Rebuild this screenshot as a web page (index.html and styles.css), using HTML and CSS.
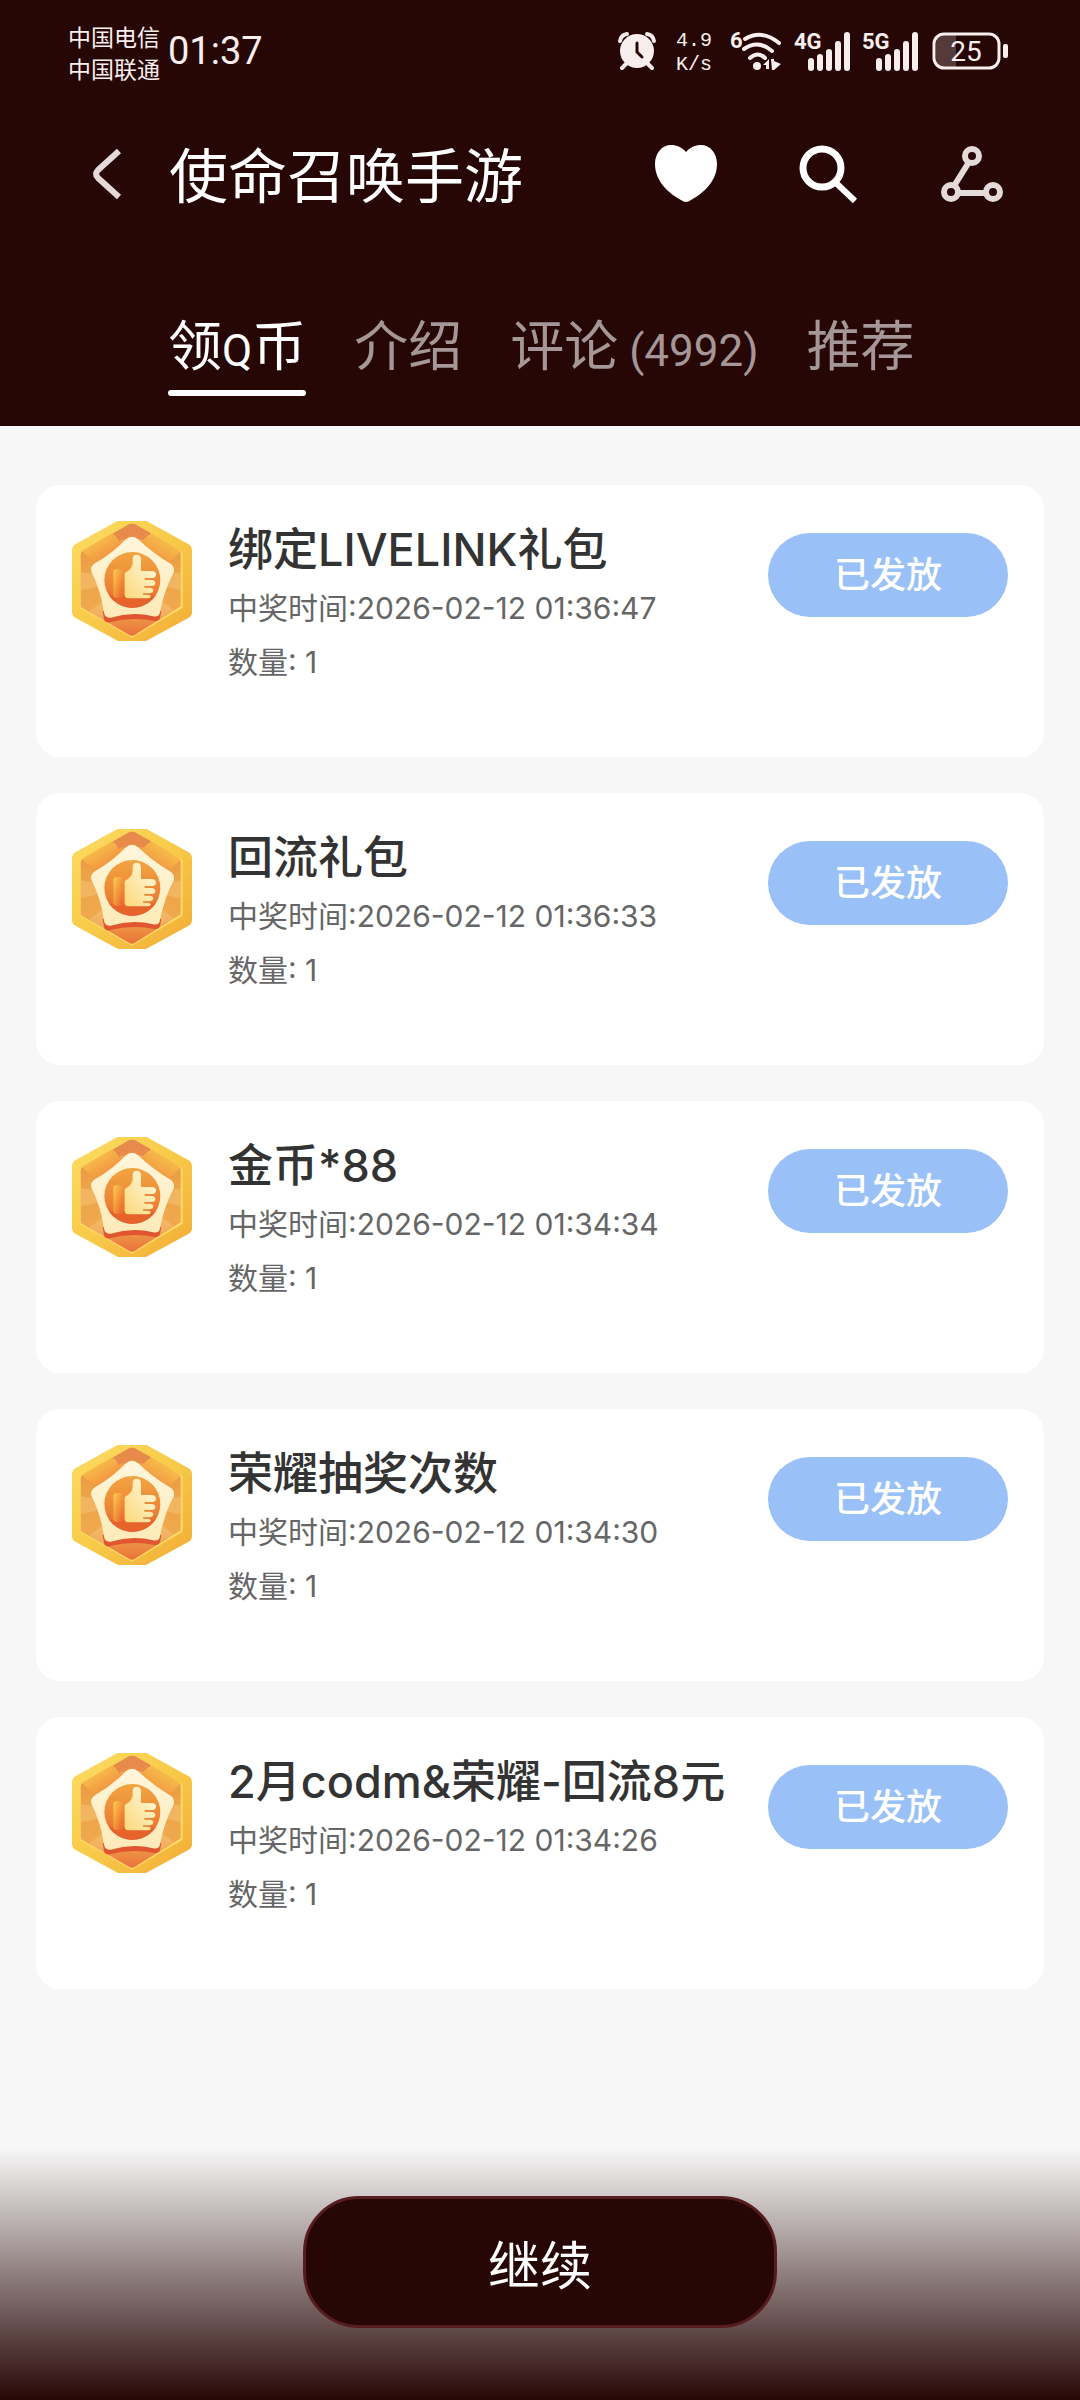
FILE: index.html
```html
<!DOCTYPE html>
<html lang="zh-CN">
<head>
<meta charset="utf-8">
<meta name="viewport" content="width=device-width, initial-scale=1">
<title>使命召唤手游</title>
<link rel="stylesheet" href="styles.css">
</head>
<body>
<svg class="sprite" width="0" height="0" aria-hidden="true">
  <defs>
    <linearGradient id="rim" x1="0" y1="0" x2="1" y2="1">
      <stop offset="0" stop-color="#fbdc62"/><stop offset=".5" stop-color="#f8ca48"/><stop offset="1" stop-color="#f2ab35"/>
    </linearGradient>
    <linearGradient id="inner" x1="0" y1="0" x2="0" y2="1">
      <stop offset="0" stop-color="#ec8748"/><stop offset=".4" stop-color="#eda446"/><stop offset=".75" stop-color="#f0a84e"/><stop offset="1" stop-color="#ea7338"/>
    </linearGradient>
    <linearGradient id="band" x1="0" y1="0" x2="1" y2="1">
      <stop offset="0" stop-color="#fbd552"/><stop offset="1" stop-color="#ec7038"/>
    </linearGradient>
    <linearGradient id="bandRight" x1="1" y1="0" x2="0" y2="1">
      <stop offset="0" stop-color="#fbd552"/><stop offset="1" stop-color="#ec7a38"/>
    </linearGradient>
    <linearGradient id="star" x1="0" y1="0" x2="0" y2="1">
      <stop offset="0" stop-color="#fff6dc"/><stop offset="1" stop-color="#fdeab8"/>
    </linearGradient>
    <linearGradient id="disc" x1="0" y1="0" x2="0" y2="1">
      <stop offset="0" stop-color="#f2a541"/><stop offset=".6" stop-color="#ec8535"/><stop offset="1" stop-color="#e4602b"/>
    </linearGradient>
    <linearGradient id="hand" x1="1" y1="0" x2="0" y2="1">
      <stop offset="0" stop-color="#fffbe6"/><stop offset="1" stop-color="#fbd878"/>
    </linearGradient>
    <linearGradient id="cuff" x1="0" y1="0" x2="1" y2="1">
      <stop offset="0" stop-color="#fbcf4c"/><stop offset="1" stop-color="#e95f2c"/>
    </linearGradient>
    <symbol id="badge" viewBox="0 0 360 360">
      <path fill="url(#rim)" d="M136 0H224L350 70Q360 76 360 88V272Q360 284 350 290L222 360H138L10 290Q0 284 0 272V88Q0 76 10 70Z"/>
      <path fill="#fbd967" d="M180 6L322 86Q332 92 332 102V260L180 350L24 262V102Q24 94 34 90Z"/>
      <path fill="url(#inner)" d="M172 10Q180 6 188 10L318 86Q326 91 326 102V256L188 342Q180 346 172 342L26 258V102Q26 92 34 88Z"/>
      <path fill="#f5c377" opacity=".5" d="M26 154L180 176L26 208ZM326 154L180 176L326 208ZM50 272L180 176L100 302ZM306 268L180 176L254 298Z"/>
      <path fill="url(#band)" d="M30 90L118 38L180 66L92 130Q60 120 30 90Z"/>
      <path fill="url(#bandRight)" d="M326 90L240 38L180 60L270 130Q304 118 326 90Z"/>
      <path fill="#e88a4c" d="M126 36L172 10Q180 6 188 10L236 36L212 58L180 42L140 60Z"/>
      <path fill="#df5631" d="M92 270H268L264 292Q260 302 248 300Q180 286 112 304Q98 306 96 294Z"/>
      <path fill="url(#star)" d="M160 56Q180 38 200 56Q240 94 292 126Q308 134 306 152Q278 204 264 272Q262 290 244 286Q180 270 116 290Q98 292 96 274Q86 206 58 152Q54 136 70 126Q122 96 160 56Z"/>
      <circle cx="181" cy="177" r="84" fill="url(#disc)"/>
      <path fill="#e6632c" d="M112 224H250A84 84 0 0 1 112 224Z"/>
      <rect x="124" y="145" width="30" height="86" rx="9" fill="url(#cuff)"/>
      <path fill="url(#hand)" d="M158 156Q178 146 182 128V113Q182 101 194 101Q207 101 207 116V150H240Q252 151 252 161Q252 170 241 171H218V177H239Q250 178 250 187Q249 195 239 195H217V200H234Q245 201 244 209Q243 216 234 217H213V221H226Q238 222 236 228Q234 232 226 232H168Q158 231 158 222Z"/>
    </symbol>
  </defs>
</svg>

<header class="header">
  <div class="status">
    <div class="carriers"><span>中国电信</span><span>中国联通</span></div>
    <span class="clock">01:37</span>
    <div class="status-icons">
      <svg class="alarm" width="38" height="40" viewBox="0 0 38 40" role="img" aria-label="闹钟">
        <circle cx="19" cy="20" r="17" fill="currentColor"/>
        <path d="M2 10Q3 4 9 3M36 10Q35 4 29 3" fill="none" stroke="currentColor" stroke-width="4" stroke-linecap="round"/>
        <path d="M8 33L4 37M30 33L34 37" stroke="currentColor" stroke-width="4" stroke-linecap="round"/>
        <path d="M19 12V21L24 26" fill="none" stroke="#270706" stroke-width="3" stroke-linecap="round" stroke-linejoin="round"/>
      </svg>
      <div class="speed"><span>4.9</span><span>K/s</span></div>
      <svg class="wifi" width="54" height="40" viewBox="0 0 54 40" role="img" aria-label="无线网络">
        <text x="0" y="17" class="net-label">6</text>
        <path d="M15 8Q32 -2 49 12M14 18Q28 8 42 20M20 27Q28 20 35 27" fill="none" stroke="currentColor" stroke-width="4" stroke-linecap="round"/>
        <circle cx="27" cy="35" r="4" fill="currentColor"/>
        <path d="M33 34L39 28V38H36V34ZM41 28H44V30L51 33L44 39H42Z" fill="currentColor"/>
      </svg>
      <svg class="signal" width="58" height="40" viewBox="0 0 58 40" role="img" aria-label="4G 信号">
        <text x="0" y="18" class="net-label">4G</text>
        <path d="M17 30V37M26 26V37M35 21V37M44 13V37M53 4V37" stroke="currentColor" stroke-width="6" stroke-linecap="round"/>
      </svg>
      <svg class="signal" width="58" height="40" viewBox="0 0 58 40" role="img" aria-label="5G 信号">
        <text x="0" y="18" class="net-label">5G</text>
        <path d="M17 30V37M26 26V37M35 21V37M44 13V37M53 4V37" stroke="currentColor" stroke-width="6" stroke-linecap="round"/>
      </svg>
      <svg class="battery" width="76" height="40" viewBox="0 0 76 40" role="img" aria-label="电量 25">
        <path d="M11 4H24V36H11Q4 35 4 28V12Q4 5 11 4Z" fill="#553a3a"/>
        <rect x="2" y="3" width="65" height="34" rx="10" fill="none" stroke="currentColor" stroke-width="3"/>
        <rect x="71" y="13" width="5" height="14" rx="2" fill="currentColor"/>
        <text x="34" y="30" text-anchor="middle" class="battery-label">25</text>
      </svg>
    </div>
  </div>

  <div class="titlebar">
    <button class="icon-button back" type="button" aria-label="返回">
      <svg width="32" height="54" viewBox="0 0 32 54"><path d="M29 4L8 23Q4 27 8 31L29 50" fill="none" stroke="#e4dada" stroke-width="6" stroke-linejoin="round"/></svg>
    </button>
    <h1 class="title">使命召唤手游</h1>
    <div class="actions">
      <button class="icon-button" type="button" aria-label="收藏">
        <svg width="64" height="60" viewBox="0 0 64 60"><path fill="#fff" d="M32 8C37 2 43 1 47 1C56 1 63 9 63 20C63 38 48 50 37 56Q32 60 27 56C16 50 1 38 1 20C1 9 8 1 17 1C21 1 27 2 32 8Z"/></svg>
      </button>
      <button class="icon-button" type="button" aria-label="搜索">
        <svg width="60" height="60" viewBox="0 0 60 60"><circle cx="23" cy="24" r="19" fill="none" stroke="#fff" stroke-width="7"/><path d="M36 38L56 57" stroke="#fff" stroke-width="6"/></svg>
      </button>
      <button class="icon-button" type="button" aria-label="分享">
        <svg width="64" height="60" viewBox="0 0 64 60"><g fill="none" stroke="#e4dada" stroke-width="6"><circle cx="32" cy="12" r="7"/><circle cx="11" cy="48" r="7"/><circle cx="53" cy="48" r="7"/><path d="M29 18L14 42M18 49H46"/></g></svg>
      </button>
    </div>
  </div>

  <nav class="tabs">
    <a class="tab active" href="#coins" aria-current="page">领<span class="latin">Q</span>币</a>
    <a class="tab" href="#intro">介绍</a>
    <a class="tab" href="#comments">评论<span class="latin"> (4992)</span></a>
    <a class="tab" href="#recommend">推荐</a>
  </nav>
</header>

<main class="prizes" id="coins">
  <article class="card">
    <svg class="badge" aria-hidden="true"><use href="#badge"/></svg>
    <div class="info"><h2>绑定LIVELINK礼包</h2><p>中奖时间:2026-02-12 01:36:47</p><p>数量: 1</p></div>
    <button class="issued" type="button">已发放</button>
  </article>
  <article class="card">
    <svg class="badge" aria-hidden="true"><use href="#badge"/></svg>
    <div class="info"><h2>回流礼包</h2><p>中奖时间:2026-02-12 01:36:33</p><p>数量: 1</p></div>
    <button class="issued" type="button">已发放</button>
  </article>
  <article class="card">
    <svg class="badge" aria-hidden="true"><use href="#badge"/></svg>
    <div class="info"><h2>金币*88</h2><p>中奖时间:2026-02-12 01:34:34</p><p>数量: 1</p></div>
    <button class="issued" type="button">已发放</button>
  </article>
  <article class="card">
    <svg class="badge" aria-hidden="true"><use href="#badge"/></svg>
    <div class="info"><h2>荣耀抽奖次数</h2><p>中奖时间:2026-02-12 01:34:30</p><p>数量: 1</p></div>
    <button class="issued" type="button">已发放</button>
  </article>
  <article class="card">
    <svg class="badge" aria-hidden="true"><use href="#badge"/></svg>
    <div class="info"><h2>2月codm&amp;荣耀-回流8元</h2><p>中奖时间:2026-02-12 01:34:26</p><p>数量: 1</p></div>
    <button class="issued" type="button">已发放</button>
  </article>
</main>

<footer class="footer">
  <button class="continue" type="button">继续</button>
</footer>
</body>
</html>
```

FILE: styles.css
```css
:root {
  --dark: #270706;
  --page: #f7f7f7;
  --status: #f8eeee;
}

* {
  box-sizing: border-box;
}

body {
  display: flex;
  flex-direction: column;
  min-height: 100vh;
  margin: 0;
  background: var(--page);
  font-family: Inter, "Noto Sans CJK SC", sans-serif;
}

h1, h2, p {
  margin: 0;
}

button {
  padding: 0;
  border: 0;
  background: none;
  font: inherit;
  cursor: pointer;
}

svg {
  display: block;
  overflow: visible;
}

.sprite {
  position: absolute;
}

/* Header */
.header {
  padding-bottom: 30px;
  background: var(--dark);
  color: #fff;
  font-family: Roboto, "Noto Sans CJK SC", sans-serif;
}

.status {
  display: flex;
  align-items: center;
  height: 102px;
  padding: 0 72px 0 68px;
  color: var(--status);
}

.carriers {
  display: flex;
  flex-direction: column;
  margin-top: 8px;
  font-size: 23px;
  line-height: 32px;
}

.clock {
  margin-left: 8px;
  font-size: 38px;
  line-height: 48px;
}

.status-icons {
  display: flex;
  align-items: center;
  margin-left: auto;
}

.speed {
  display: flex;
  flex-direction: column;
  margin: 4px 18px 0 20px;
  font-family: "Liberation Mono", monospace;
  font-size: 20px;
  line-height: 24px;
  text-align: center;
}

.signal {
  margin-left: 10px;
}

.battery {
  margin-left: 12px;
}

.net-label {
  fill: currentColor;
  font-size: 22px;
  font-weight: 700;
}

.battery-label {
  fill: currentColor;
  font-size: 28px;
}

.titlebar {
  display: flex;
  align-items: center;
  height: 144px;
  padding: 0 76px 0 90px;
}

.icon-button {
  display: grid;
  place-items: center;
}

.title {
  margin: 8px 0 0 47px;
  font-size: 59px;
  font-weight: 400;
  line-height: 80px;
}

.actions {
  display: flex;
  align-items: center;
  gap: 81px;
  margin-left: auto;
}

.tabs {
  display: flex;
  gap: 48px;
  margin-top: 66px;
  padding: 0 168px;
}

.tab {
  position: relative;
  padding-bottom: 12px;
  color: #a59797;
  font-size: 54px;
  line-height: 72px;
  text-decoration: none;
  white-space: nowrap;
}

.tab.active {
  color: #fff;
}

.tab.active::after {
  content: "";
  position: absolute;
  right: 0;
  bottom: 0;
  left: 0;
  height: 6px;
  border-radius: 3px;
  background: #fff;
}

.latin {
  font-size: 44px;
  line-height: 1;
}

/* Prize list */
.prizes {
  display: flex;
  flex-direction: column;
  gap: 36px;
  padding: 59px 36px 0;
}

.card {
  display: flex;
  align-items: flex-start;
  min-height: 272px;
  padding: 36px;
  border-radius: 24px;
  background: #fff;
}

.badge {
  flex: none;
  width: 120px;
  height: 120px;
}

.info {
  flex: 1;
  margin-left: 36px;
  white-space: nowrap;
}

.info h2 {
  color: #333;
  font-size: 45px;
  font-weight: 500;
  line-height: 58px;
}

.info p {
  color: #666;
  font-size: 30px;
  line-height: 54px;
}

.info h2 + p {
  margin-top: 2px;
}

.issued {
  flex: none;
  width: 240px;
  height: 84px;
  margin-top: 12px;
  padding-bottom: 6px;
  border-radius: 42px;
  background: #99c1f7;
  color: #fff;
  font-size: 36px;
  font-weight: 500;
}

/* Bottom action */
.footer {
  display: flex;
  justify-content: center;
  margin-top: auto;
  padding: 48px 24px 72px;
  background: linear-gradient(var(--page), var(--dark));
}

.continue {
  width: 46%;
  height: 132px;
  border: 3px solid #571d1e;
  border-radius: 56px;
  background: var(--dark);
  color: #fff;
  font-size: 52px;
}
```
